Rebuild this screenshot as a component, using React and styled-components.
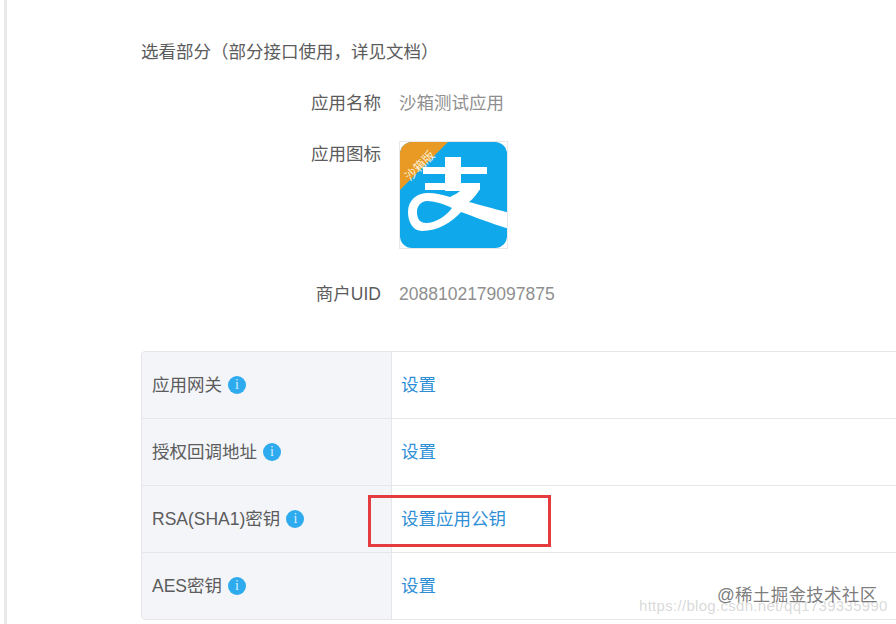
import React from "react";
import styled, { createGlobalStyle } from "styled-components";

const GlobalStyle = createGlobalStyle`
	html, body {
		margin: 0;
		padding: 0;
		background: #fff;
		overflow: hidden;
	}
	body {
		font-family: "Liberation Sans", "Noto Sans CJK SC", sans-serif;
		text-spacing-trim: space-all;
	}
`;

const Page = styled.div`
	position: relative;
	width: 896px;
	height: 624px;
	display: flex;
	overflow: hidden;
	background: #fff;
`;
const Rail = styled.div`
	flex: none;
	width: 3px;
	margin-left: 4px;
	background: #e9e9e9;
`;
const Content = styled.div`
	flex: none;
	width: 800px;
	padding: 40px 0 0 134px;
`;
const Heading = styled.div`
	font-size: 17.5px;
	line-height: 24px;
	color: #5c5c5c;
	white-space: nowrap;
`;
const InfoList = styled.div`
	margin-top: 27px;
	display: flex;
	flex-direction: column;
	gap: 27px;
`;
const InfoRow = styled.div`
	display: flex;
	gap: 18px;
	align-items: flex-start;
`;
const InfoLabel = styled.div`
	width: 240px;
	text-align: right;
	font-size: 17.5px;
	line-height: 24px;
	color: #5c5c5c;
`;
const InfoValue = styled.div`
	font-size: 17.5px;
	line-height: 24px;
	color: #8f8f8f;
`;
const LogoBox = styled.div`
	width: 109px;
	height: 108px;
	margin: -1px 0 6px;
	box-sizing: border-box;
	border: 1px solid #e8e8e8;
`;
const Table = styled.div`
	margin-top: 45px;
	width: 800px;
	border: 1px solid #e6e6e6;
	border-radius: 4px;
	overflow: hidden;
`;
const Row = styled.div`
	display: flex;
	height: 66px;
	border-top: ${(props) => (props.first ? "none" : "1px solid #e6e6e6")};
`;
const RowHead = styled.div`
	flex: none;
	width: 250px;
	box-sizing: border-box;
	padding: 0 0 4px 10px;
	display: flex;
	align-items: center;
	gap: 6px;
	background: #f3f5f9;
	border-right: 1px solid #e6e6e6;
	font-size: 17.5px;
	color: #5c5c5c;
`;
const RowBody = styled.div`
	flex: 1;
	padding: 0 0 4px 9px;
	display: flex;
	align-items: center;
`;
const LinkText = styled.a`
	font-size: 17.5px;
	color: #2f8fd6;
`;
const InfoDot = styled.span`
	flex: none;
	width: 18px;
	height: 18px;
	margin-top: 3px;
	border-radius: 50%;
	background: #2eaaee;
	color: #d8f0fd;
	font-family: "Liberation Serif", serif;
	font-size: 14px;
	line-height: 18px;
	text-align: center;
`;
const Highlight = styled.div`
	position: absolute;
	left: 368px;
	top: 495px;
	width: 183px;
	height: 52px;
	box-sizing: border-box;
	border: 3px solid #e33b3e;
`;
const CsdnMark = styled.div`
	position: absolute;
	left: 639px;
	top: 596px;
	font-size: 15px;
	line-height: 20px;
	letter-spacing: 0.3px;
	color: rgba(120, 120, 120, 0.3);
	white-space: nowrap;
`;
const JuejinMark = styled.div`
	position: absolute;
	left: 717px;
	top: 584px;
	font-size: 17.5px;
	line-height: 22px;
	letter-spacing: 0.3px;
	color: rgba(90, 90, 90, 0.8);
	white-space: nowrap;
`;

const AlipayLogo = () => (
	<svg width="107" height="106" viewBox="0 0 107 106">
		<defs>
			<clipPath id="logoClip">
				<rect width="107" height="106" rx="12" />
			</clipPath>
		</defs>
		<g clipPath="url(#logoClip)">
			<rect width="107" height="106" fill="#0fa8ea" />
			<path d="M0 48 L48 0 L0 0 Z" fill="#e89a24" />
			<text
				x="20"
				y="24"
				fontSize="12"
				fill="#fdf1d8"
				textAnchor="middle"
				dominantBaseline="central"
				transform="rotate(-45 20 24)"
			>
				沙箱版
			</text>
			<rect x="45" y="15" width="16" height="34" fill="#fff" />
			<rect x="23" y="25" width="64" height="7" fill="#fff" />
			<rect x="25" y="41" width="55" height="7" fill="#fff" />
			<path
				fillRule="evenodd"
				d="M62 47 L80 47 C77 52 73 57 69 60 C80 63 95 67 110 71 L110 87 C92 82 75 75 61 70 C52 80 38 89 22 89 C13 89 8 80 8 70 C8 58 17 51 28 51 C36 51 43 53 50 55 C54 53 60 50 62 47 Z M52 66 C44 62 34 59 27 59 C21 59 17 64 17 70 C17 77 20 81 26 81 C36 81 46 74 52 66 Z"
				fill="#fff"
			/>
		</g>
	</svg>
);

const rows = [
	{ name: "应用网关", link: "设置" },
	{ name: "授权回调地址", link: "设置" },
	{ name: "RSA(SHA1)密钥", link: "设置应用公钥" },
	{ name: "AES密钥", link: "设置" },
];

const App = () => {
	return (
		<Page>
			<GlobalStyle />
			<Rail />
			<Content>
				<Heading>选看部分（部分接口使用，详见文档）</Heading>
				<InfoList>
					<InfoRow>
						<InfoLabel>应用名称</InfoLabel>
						<InfoValue>沙箱测试应用</InfoValue>
					</InfoRow>
					<InfoRow>
						<InfoLabel>应用图标</InfoLabel>
						<LogoBox>
							<AlipayLogo />
						</LogoBox>
					</InfoRow>
					<InfoRow>
						<InfoLabel>商户UID</InfoLabel>
						<InfoValue>2088102179097875</InfoValue>
					</InfoRow>
				</InfoList>
				<Table>
					{rows.map((row, i) => (
						<Row key={row.name} first={i === 0}>
							<RowHead>
								{row.name}
								<InfoDot>i</InfoDot>
							</RowHead>
							<RowBody>
								<LinkText>{row.link}</LinkText>
							</RowBody>
						</Row>
					))}
				</Table>
			</Content>
			<Highlight />
			<CsdnMark>https://blog.csdn.net/qq1739335990</CsdnMark>
			<JuejinMark>@稀土掘金技术社区</JuejinMark>
		</Page>
	);
};

export default App;
